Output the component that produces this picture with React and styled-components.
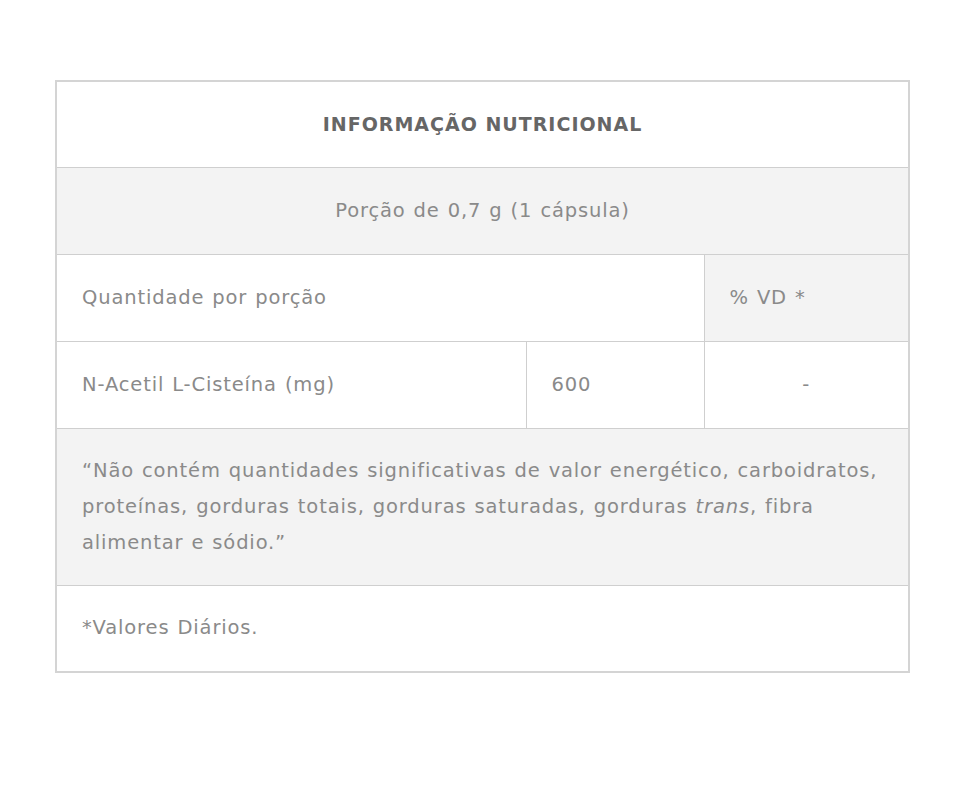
import styled, { createGlobalStyle } from 'styled-components';

const GlobalStyle = createGlobalStyle`
    body {
        margin: 0;
        background: #ffffff;
        font-family: "DejaVu Sans", "Open Sans", sans-serif;
    }
`;

const Page = styled.div`
    padding: 80px 0 0 55px;
`;

const Table = styled.table`
    width: 853px;
    border-collapse: collapse;
    table-layout: fixed;
    border: 2px solid #d4d4d4;
    color: #8a8a8a;
    font-size: 19.5px;
    letter-spacing: 0.85px;
    word-spacing: 1px;
`;

const Cell = styled.td`
    height: 87px;
    padding: 0 25px;
    border: 1px solid #cfcfcf;
    background: ${(p) => (p.$shade ? '#f3f3f3' : '#ffffff')};
    text-align: ${(p) => p.$align || 'left'};
    line-height: 36px;
    box-sizing: border-box;
`;

const Title = styled(Cell)`
    height: 86px;
    color: #666666;
    font-size: 19px;
    font-weight: bold;
    letter-spacing: 1px;
    word-spacing: 0;
`;

const Note = styled(Cell)`
    height: 157px;
    padding: 24px 25px 24px;
`;

const App = () => {
    return (
        <Page>
            <GlobalStyle />
            <Table>
                <colgroup>
                    <col style={{ width: 470 }} />
                    <col style={{ width: 178 }} />
                    <col style={{ width: 205 }} />
                </colgroup>
                <tbody>
                    <tr>
                        <Title colSpan={3} $align="center">INFORMAÇÃO NUTRICIONAL</Title>
                    </tr>
                    <tr>
                        <Cell colSpan={3} $shade $align="center">Porção de 0,7 g (1 cápsula)</Cell>
                    </tr>
                    <tr>
                        <Cell colSpan={2}>Quantidade por porção</Cell>
                        <Cell $shade>% VD *</Cell>
                    </tr>
                    <tr>
                        <Cell>N-Acetil L-Cisteína (mg)</Cell>
                        <Cell>600</Cell>
                        <Cell $align="center">-</Cell>
                    </tr>
                    <tr>
                        <Note colSpan={3} $shade>
                            “Não contém quantidades significativas de valor energético, carboidratos,
                            proteínas, gorduras totais, gorduras saturadas, gorduras <i>trans</i>, fibra
                            alimentar e sódio.”
                        </Note>
                    </tr>
                    <tr>
                        <Cell colSpan={3}>*Valores Diários.</Cell>
                    </tr>
                </tbody>
            </Table>
        </Page>
    );
};

export default App;
